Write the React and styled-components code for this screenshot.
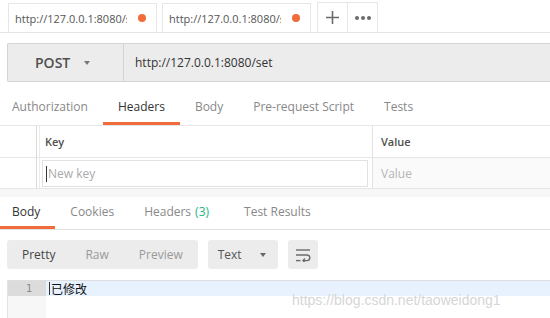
import React from "react";
import styled, { createGlobalStyle } from "styled-components";

const Global = createGlobalStyle`
  html, body { margin: 0; padding: 0; background: #fff; }
  body { font-family: "Open Sans", "Noto Sans", sans-serif; }
  #root { width: 550px; height: 318px; overflow: hidden; position: relative; }
`;

const orange = "#f26b3a";

const TabBar = styled.div`
  display: flex;
  align-items: flex-end;
  height: 32px;
  padding-left: 8px;
  gap: 5px;
  border-bottom: 1px solid #e4e4e4;
`;

const Tab = styled.div`
  width: 149px;
  height: 29px;
  box-sizing: border-box;
  border: 1px solid #e6e6e6;
  border-bottom: none;
  background: #fff;
  display: flex;
  align-items: center;
  padding: 0 10px 0 6px;
  gap: 11px;
`;

const TabLabel = styled.span`
  flex: 1;
  min-width: 0;
  overflow: hidden;
  white-space: nowrap;
  font-size: 11px;
  color: #555;
`;

const Dot = styled.span`
  width: 8px;
  height: 8px;
  border-radius: 50%;
  background: ${orange};
  flex: none;
`;

const IconGroup = styled.div`
  display: flex;
  margin-left: 1px;
  height: 30px;
  box-sizing: border-box;
  border: 1px solid #e6e6e6;
  border-bottom: none;
`;

const IconBtn = styled.div`
  width: 29px;
  display: flex;
  align-items: center;
  justify-content: center;
  color: #6b6b6b;
  & + & { border-left: 1px solid #e6e6e6; }
`;

const RequestArea = styled.div`
  padding: 10px 0 0 7px;
`;

const MethodBar = styled.div`
  display: flex;
  height: 39px;
  box-sizing: border-box;
  border: 1px solid #d4d4d4;
  border-right: none;
  background: #ececec;
  border-radius: 2px 0 0 2px;
`;

const MethodSelect = styled.div`
  width: 116px;
  box-sizing: border-box;
  border-right: 1px solid #d4d4d4;
  display: flex;
  align-items: center;
  padding-left: 27px;
  gap: 14px;
  font-size: 14px;
  font-weight: 600;
  color: #505050;
`;

const Caret = styled.span`
  width: 0;
  height: 0;
  border-left: 3.5px solid transparent;
  border-right: 3.5px solid transparent;
  border-top: 4px solid ${p => p.$color || "#777"};
`;

const UrlText = styled.div`
  display: flex;
  align-items: center;
  padding-left: 11px;
  font-size: 12px;
  color: #333;
`;

const TabsRow = styled.div`
  display: flex;
  margin-top: ${p => p.$mt || 0}px;
  border-bottom: ${p => (p.$line ? "1px solid #e2e2e2" : "none")};
`;

const NavTab = styled.div`
  height: ${p => p.$h}px;
  box-sizing: border-box;
  padding: 0 ${p => p.$pr || 15}px 0 15px;
  &:first-child { padding-left: 12px; }
  display: flex;
  align-items: center;
  font-size: 12px;
  color: ${p => (p.$active ? "#333" : "#888")};
  border-bottom: 3px solid ${p => (p.$active ? orange : "transparent")};
  white-space: nowrap;
`;

const Count = styled.span`
  color: #26b47f;
  margin-left: 4px;
`;

const Table = styled.div`
  border-top: 1px solid #e6e6e6;
`;

const Row = styled.div`
  display: grid;
  grid-template-columns: 37px 336px 1fr;
  height: ${p => p.$h}px;
  border-bottom: 1px solid #e6e6e6;
`;

const HandleCell = styled.div`
  border-right: 1px solid #d9d9d9;
`;

const KeyCell = styled.div`
  margin-left: 2px;
  border-left: 1px solid #ececec;
  border-right: 1px solid #e2e2e2;
  display: flex;
  align-items: center;
  padding: ${p => (p.$input ? "2px 4px 1px 2px" : "0 0 0 5px")};
  font-size: 11px;
  font-weight: 600;
  color: #505050;
`;

const ValueCell = styled.div`
  display: flex;
  align-items: center;
  padding-left: 8px;
  font-size: ${p => (p.$ph ? 12 : 11)}px;
  font-weight: ${p => (p.$ph ? 400 : 600)};
  color: ${p => (p.$ph ? "#b5b5b5" : "#505050")};
  background: ${p => (p.$ph ? "#fafafa" : "#fff")};
`;

const KeyInput = styled.div`
  flex: 1;
  align-self: stretch;
  border: 1px solid #e2e2e2;
  background: #fff;
  display: flex;
  align-items: center;
  padding-left: 3px;
  font-size: 12px;
  font-weight: 400;
  color: #aaa;
`;

const TextCaret = styled.span`
  width: 1px;
  height: ${p => p.$h || 16}px;
  background: #333;
  margin-right: 1px;
`;

const Divider = styled.div`
  height: 8px;
  background: #f7f7f7;
`;

const Toolbar = styled.div`
  display: flex;
  gap: 10px;
  padding-left: 7px;
  margin-top: 10px;
`;

const Segmented = styled.div`
  display: flex;
  height: 29px;
  background: #ececec;
  border-radius: 3px;
`;

const SegBtn = styled.div`
  padding: 0 15px;
  display: flex;
  align-items: center;
  font-size: 12px;
  color: ${p => (p.$active ? "#444" : "#9a9a9a")};
`;

const Dropdown = styled.div`
  width: 70px;
  height: 29px;
  box-sizing: border-box;
  background: #ececec;
  border-radius: 3px;
  display: flex;
  align-items: center;
  padding-left: 10px;
  gap: 18px;
  font-size: 12px;
  color: #555;
`;

const SquareBtn = styled.div`
  width: 30px;
  height: 29px;
  background: #ececec;
  border-radius: 3px;
  display: flex;
  align-items: center;
  justify-content: center;
  color: #6c6c6c;
`;

const Editor = styled.div`
  margin: 11px 0 0 7px;
  border-top: 1px solid #dedede;
  border-left: 1px solid #e4e4e4;
  height: 40px;
  display: grid;
  grid-template-columns: 38px 1fr;
  grid-template-rows: 15px 1fr;
`;

const Gutter = styled.div`
  background: ${p => (p.$active ? "#dcdcdc" : "#f7f7f7")};
  font-family: "DejaVu Sans Mono", monospace;
  font-size: 10px;
  color: #888;
  text-align: right;
  padding-right: 14px;
  line-height: 15px;
`;

const CodeLine = styled.div`
  background: ${p => (p.$active ? "#e8f2ff" : "#fff")};
  display: flex;
  align-items: center;
  padding-left: 3px;
  font-family: "Noto Sans CJK SC", sans-serif;
  font-size: 12px;
  color: #111;
`;

const Watermark = styled.div`
  position: absolute;
  left: 292px;
  top: 292px;
  font-family: "Liberation Sans", Arial, sans-serif;
  font-size: 14px;
  color: #d6d6d6;
`;

const WrapIcon = () => (
  <svg width="16" height="14" viewBox="0 0 16 14" fill="none" stroke="currentColor" strokeWidth="1.4">
    <path d="M1 2H15" />
    <path d="M1 7H12a2.8 2.8 0 0 1 0 5.6H8" />
    <path d="M10 10.6L8 12.6L10 14.6" />
    <path d="M1 12.6H5.5" />
  </svg>
);

const PlusIcon = () => (
  <svg width="13" height="13" viewBox="0 0 13 13" stroke="currentColor" strokeWidth="1.6">
    <path d="M6.5 0V13M0 6.5H13" />
  </svg>
);

const MoreIcon = () => (
  <svg width="16" height="4" viewBox="0 0 16 4" fill="currentColor">
    <circle cx="2" cy="2" r="2" />
    <circle cx="8" cy="2" r="2" />
    <circle cx="14" cy="2" r="2" />
  </svg>
);

export default function App() {
  return (
    <>
      <Global />
      <TabBar>
        <Tab>
          <TabLabel>http://127.0.0.1:8080/set</TabLabel>
          <Dot />
        </Tab>
        <Tab>
          <TabLabel>http://127.0.0.1:8080/set</TabLabel>
          <Dot />
        </Tab>
        <IconGroup>
          <IconBtn><PlusIcon /></IconBtn>
          <IconBtn><MoreIcon /></IconBtn>
        </IconGroup>
      </TabBar>

      <RequestArea>
        <MethodBar>
          <MethodSelect>
            POST <Caret />
          </MethodSelect>
          <UrlText>http://127.0.0.1:8080/set</UrlText>
        </MethodBar>
      </RequestArea>

      <TabsRow $mt={8}>
        <NavTab $h={35}>Authorization</NavTab>
        <NavTab $h={35} $active>Headers</NavTab>
        <NavTab $h={35}>Body</NavTab>
        <NavTab $h={35}>Pre-request Script</NavTab>
        <NavTab $h={35}>Tests</NavTab>
      </TabsRow>

      <Table>
        <Row $h={31}>
          <HandleCell />
          <KeyCell>Key</KeyCell>
          <ValueCell>Value</ValueCell>
        </Row>
        <Row $h={30}>
          <HandleCell />
          <KeyCell $input>
            <KeyInput>
              <TextCaret />
              New key
            </KeyInput>
          </KeyCell>
          <ValueCell $ph>Value</ValueCell>
        </Row>
      </Table>
      <Divider />

      <TabsRow $line>
        <NavTab $h={32} $active>Body</NavTab>
        <NavTab $h={32}>Cookies</NavTab>
        <NavTab $h={32} $pr={20}>
          Headers<Count>(3)</Count>
        </NavTab>
        <NavTab $h={32}>Test Results</NavTab>
      </TabsRow>

      <Toolbar>
        <Segmented>
          <SegBtn $active>Pretty</SegBtn>
          <SegBtn>Raw</SegBtn>
          <SegBtn>Preview</SegBtn>
        </Segmented>
        <Dropdown>
          Text <Caret $color="#666" />
        </Dropdown>
        <SquareBtn><WrapIcon /></SquareBtn>
      </Toolbar>

      <Editor>
        <Gutter $active>1</Gutter>
        <CodeLine $active>
          <TextCaret $h={13} />
          已修改
        </CodeLine>
        <Gutter />
        <CodeLine />
      </Editor>

      <Watermark>https://blog.csdn.net/taoweidong1</Watermark>
    </>
  );
}
